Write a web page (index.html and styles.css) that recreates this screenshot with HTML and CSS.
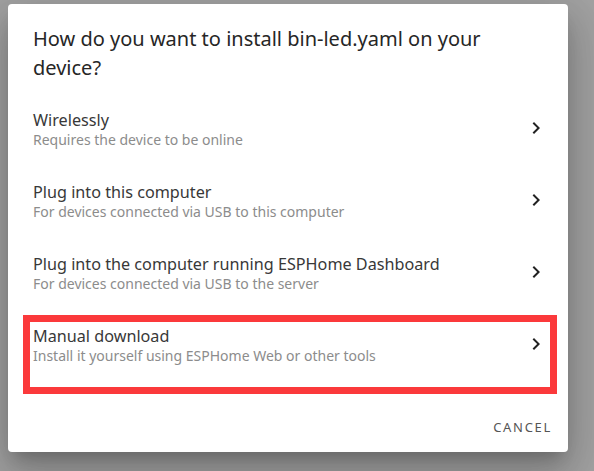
FILE: index.html
```html
<!DOCTYPE html>
<html>
<head>
<meta charset="utf-8">
<link rel="stylesheet" href="styles.css">
</head>
<body>
<div class="dialog">
  <h2 class="title">How do you want to install bin-led.yaml on your device?</h2>
  <div class="list">
    <div class="item">
      <div class="text">
        <div class="primary">Wirelessly</div>
        <div class="secondary">Requires the device to be online</div>
      </div>
      <svg class="chev" viewBox="0 0 24 24"><path d="M10 6L8.59 7.41 13.17 12l-4.58 4.59L10 18l6-6z"/></svg>
    </div>
    <div class="item">
      <div class="text">
        <div class="primary">Plug into this computer</div>
        <div class="secondary">For devices connected via USB to this computer</div>
      </div>
      <svg class="chev" viewBox="0 0 24 24"><path d="M10 6L8.59 7.41 13.17 12l-4.58 4.59L10 18l6-6z"/></svg>
    </div>
    <div class="item">
      <div class="text">
        <div class="primary">Plug into the computer running ESPHome Dashboard</div>
        <div class="secondary">For devices connected via USB to the server</div>
      </div>
      <svg class="chev" viewBox="0 0 24 24"><path d="M10 6L8.59 7.41 13.17 12l-4.58 4.59L10 18l6-6z"/></svg>
    </div>
    <div class="item marked">
      <div class="text">
        <div class="primary">Manual download</div>
        <div class="secondary">Install it yourself using ESPHome Web or other tools</div>
      </div>
      <svg class="chev" viewBox="0 0 24 24"><path d="M10 6L8.59 7.41 13.17 12l-4.58 4.59L10 18l6-6z"/></svg>
      <div class="highlight"></div>
    </div>
  </div>
  <div class="actions">
    <button class="btn">Cancel</button>
  </div>
</div>
</body>
</html>
```

FILE: styles.css
```css
html, body {
  margin: 0;
  padding: 0;
}
body {
  background: #a2a2a2;
  width: 594px;
  height: 471px;
  overflow: hidden;
  font-family: "Noto Sans", "Open Sans", sans-serif;
}
.dialog {
  margin: 4px 0 0 8px;
  width: 560px;
  height: 448px;
  background: #fff;
  border-radius: 4px;
  box-shadow: 0 11px 15px -7px rgba(0,0,0,.2), 0 24px 38px 3px rgba(0,0,0,.14), 0 9px 46px 8px rgba(0,0,0,.12);
  display: flex;
  flex-direction: column;
  box-sizing: border-box;
}
.title {
  margin: 0;
  padding: 20px 60px 0 25px;
  font-size: 20px;
  font-weight: 400;
  line-height: 29px;
  color: #262626;
}
.list {
  margin-top: 12px;
  display: flex;
  flex-direction: column;
}
.item {
  height: 72px;
  display: flex;
  align-items: center;
  padding: 0 20px 0 25px;
  position: relative;
}
.text {
  flex: 1;
  display: flex;
  flex-direction: column;
}
.primary {
  font-size: 16.2px;
  line-height: 20px;
  color: #383838;
}
.secondary {
  font-size: 14px;
  line-height: 20px;
  color: #8c8c8c;
}
.chev {
  width: 24px;
  height: 24px;
  fill: #222;
  margin-bottom: 4px;
}
.highlight {
  position: absolute;
  left: 15px;
  top: 5px;
  width: 534px;
  height: 79px;
  box-sizing: border-box;
  border: 7px solid #fb393b;
}
.actions {
  margin-top: auto;
  display: flex;
  justify-content: flex-end;
  padding: 0 8px 7px 0;
}
.btn {
  background: none;
  border: 0;
  font-family: "Noto Sans", "Open Sans", sans-serif;
  font-size: 13px;
  letter-spacing: 1.7px;
  text-transform: uppercase;
  color: #555;
  padding: 10px 8px;
  line-height: 16px;
}
```
